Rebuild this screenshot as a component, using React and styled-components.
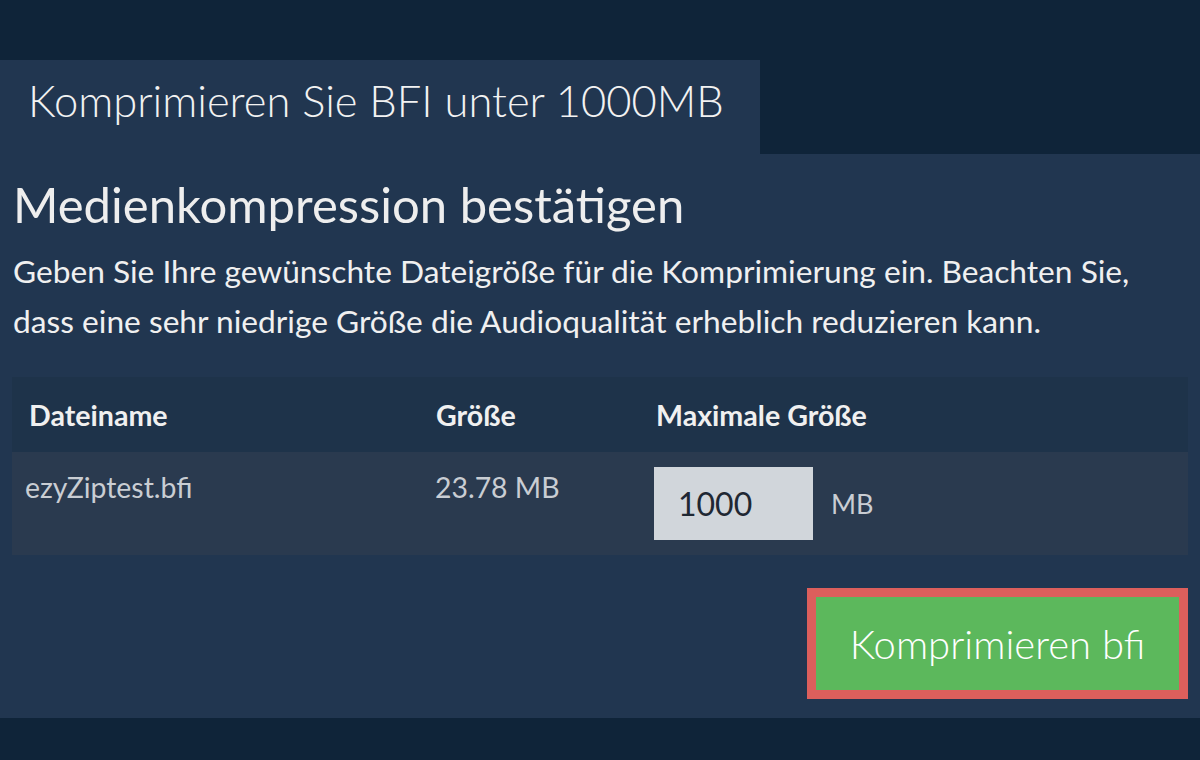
import React from "react";
import styled, { createGlobalStyle } from "styled-components";

const Global = createGlobalStyle`
  html, body { margin: 0; padding: 0; }
  body {
    background: #0f2439;
    font-family: Lato, "Open Sans", sans-serif;
    width: 1200px;
    height: 760px;
    overflow: hidden;
  }
`;

const Page = styled.div`
  padding-top: 60px;
  display: flex;
  flex-direction: column;
`;

const Tab = styled.div`
  width: 760px;
  height: 94px;
  box-sizing: border-box;
  background: #213650;
  padding: 14px 0 0 28px;
  color: #f2f2f2;
  font-weight: 300;
  font-size: 43.5px;
  line-height: 1.2;
`;

const Panel = styled.div`
  background: #213650;
  height: 564px;
  box-sizing: border-box;
  padding: 20px 12px 0 12px;
`;

const Heading = styled.h2`
  margin: 0 0 0 1px;
  font-weight: 400;
  font-size: 49px;
  line-height: 60px;
  color: #eeeeee;
`;

const Lead = styled.p`
  margin: 12px 0 0 1px;
  font-size: 31.7px;
  line-height: 50px;
  color: #f0f0f0;
  white-space: nowrap;
`;

const Table = styled.div`
  margin-top: 31px;
  display: grid;
  grid-template-columns: 407px 220px 1fr;
`;

const HeadCell = styled.div`
  background: #1e334a;
  height: 75px;
  box-sizing: border-box;
  padding: 0 17px;
  display: flex;
  align-items: center;
  font-weight: 700;
  font-size: 28.6px;
  color: #f0f0f0;
`;

const Cell = styled.div`
  background: #2a3a4f;
  height: 103px;
  box-sizing: border-box;
  padding: ${(p) => (p.$center ? "15px" : "20px")} 13px 15px;
  padding-left: ${(p) => (p.$indent ? "16px" : "13px")};
  font-size: 28.4px;
  line-height: 30px;
  color: #c9cdd3;
  display: flex;
  align-items: ${(p) => (p.$center ? "center" : "flex-start")};
  gap: 18px;
`;

const SizeInput = styled.input`
  width: 159px;
  height: 73px;
  box-sizing: border-box;
  border: none;
  outline: none;
  background: #d1d6db;
  color: #1f2833;
  font-family: Lato, sans-serif;
  font-size: 32px;
  padding: 0 24px;
  margin-left: 2px;
`;

const Unit = styled.span`
  font-size: 27px;
  color: #c9cdd3;
`;

const Actions = styled.div`
  margin-top: 33px;
  display: flex;
  justify-content: flex-end;
`;

const CompressButton = styled.button`
  width: 381px;
  height: 111px;
  box-sizing: border-box;
  border: 9px solid #dc5f5c;
  background: #5cb85c;
  color: #ffffff;
  font-family: Lato, sans-serif;
  font-weight: 300;
  font-size: 40px;
  cursor: pointer;
`;

export default function App() {
  return (
    <>
      <Global />
      <Page>
        <Tab>Komprimieren Sie BFI unter 1000MB</Tab>
        <Panel>
          <Heading>Medienkompression bestätigen</Heading>
          <Lead>
            Geben Sie Ihre gewünschte Dateigröße für die Komprimierung ein. Beachten Sie,
            <br />
            dass eine sehr niedrige Größe die Audioqualität erheblich reduzieren kann.
          </Lead>
          <Table>
            <HeadCell>Dateiname</HeadCell>
            <HeadCell>Größe</HeadCell>
            <HeadCell>Maximale Größe</HeadCell>
            <Cell>ezyZiptest.bfi</Cell>
            <Cell $indent>23.78 MB</Cell>
            <Cell $center>
              <SizeInput defaultValue="1000" />
              <Unit>MB</Unit>
            </Cell>
          </Table>
          <Actions>
            <CompressButton>Komprimieren bfi</CompressButton>
          </Actions>
        </Panel>
      </Page>
    </>
  );
}
